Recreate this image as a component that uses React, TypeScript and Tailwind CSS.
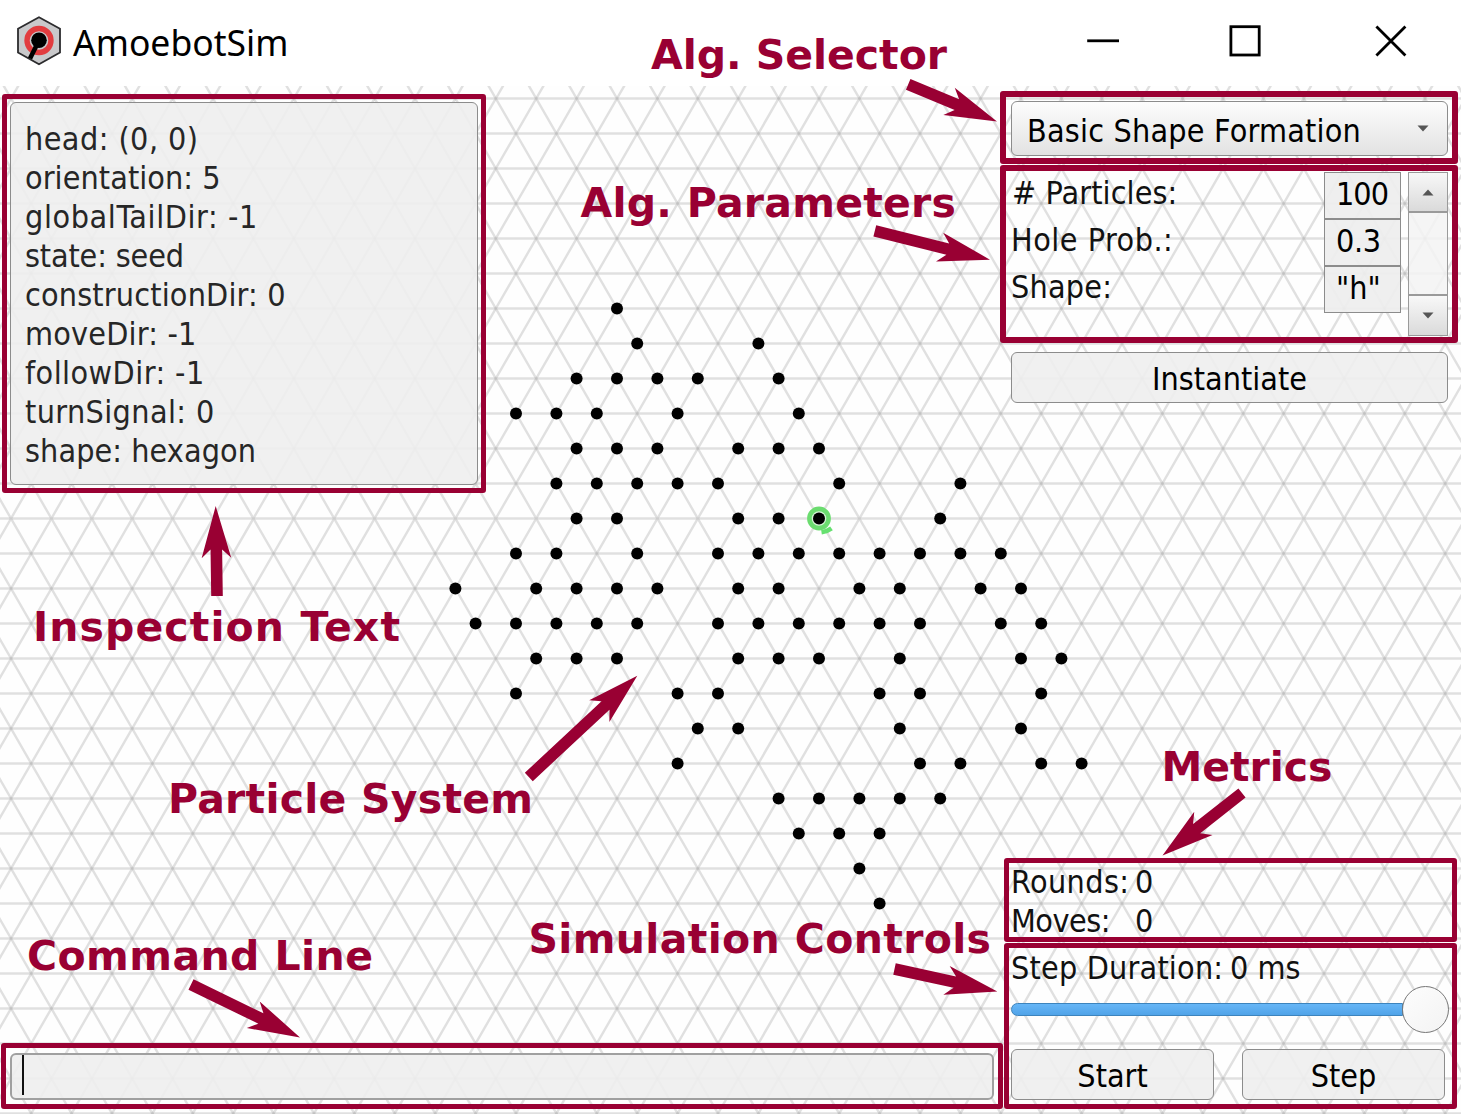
import React from "react";

const STEP_X = 20.2;
const STEP_Y = 35;
const ORIGIN_X = 819;
const ORIGIN_Y = 518.5;

// Each entry: lattice row, followed by the half-step columns that hold a particle.
const particles: [number, number[]][] = [
  [-6, [-10]],
  [-5, [-9, -3]],
  [-4, [-12, -10, -8, -6, -2]],
  [-3, [-15, -13, -11, -7, -1]],
  [-2, [-12, -10, -8, -4, -2, 0]],
  [-1, [-13, -11, -9, -7, -5, 1, 7]],
  [0, [-12, -10, -4, -2, 0, 6]],
  [1, [-15, -13, -9, -5, -3, -1, 1, 3, 5, 7, 9]],
  [2, [-18, -14, -12, -10, -8, -4, -2, 2, 4, 8, 10]],
  [3, [-17, -15, -13, -11, -9, -5, -3, -1, 1, 3, 5, 9, 11]],
  [4, [-14, -12, -10, -4, -2, 0, 4, 10, 12]],
  [5, [-15, -7, -5, 3, 5, 11]],
  [6, [-6, -4, 4, 10]],
  [7, [-7, 5, 7, 11, 13]],
  [8, [-2, 0, 2, 4, 6]],
  [9, [-1, 1, 3]],
  [10, [2]],
  [11, [3]],
];

function Lattice() {
  const rows = Array.from({ length: 30 }, (_, i) => ORIGIN_Y + (i - 12) * STEP_Y);
  const diagonals = Array.from({ length: 72 }, (_, i) => i - 46);
  const up = 14;
  const down = 18;
  return (
    <svg className="absolute inset-0" width="1461" height="1114" viewBox="0 0 1461 1114">
      <defs>
        <clipPath id="canvas">
          <rect x="0" y="86" width="1461" height="1028" />
        </clipPath>
      </defs>
      <g clipPath="url(#canvas)">
        <rect x="0" y="86" width="1461" height="1028" fill="#fefefe" />
        <g stroke="#b0b0b0" strokeOpacity="0.38" strokeWidth="2.5">
          {rows.map((y) => (
            <line key={y} x1="0" x2="1461" y1={y} y2={y} />
          ))}
          {diagonals.map((d) => {
            const x = ORIGIN_X + d * STEP_X * 2;
            return (
              <path
                key={d}
                fill="none"
                strokeWidth="2.4"
                d={`M${x - up * STEP_X} ${ORIGIN_Y - up * STEP_Y}L${x + down * STEP_X} ${ORIGIN_Y + down * STEP_Y}M${x + up * STEP_X} ${ORIGIN_Y - up * STEP_Y}L${x - down * STEP_X} ${ORIGIN_Y + down * STEP_Y}`}
              />
            );
          })}
        </g>
        <circle cx="819" cy="518.5" r="9.6" fill="#d5f3d6" stroke="#6bdc6f" strokeWidth="4.6" />
        <path d="M821.5 532.3Q827 531.5 831.5 528.3" fill="none" stroke="#66e070" strokeWidth="4.6" />
        {particles.map(([row, cols]) =>
          cols.map((c) => (
            <circle key={`${row}:${c}`} cx={ORIGIN_X + c * STEP_X} cy={ORIGIN_Y + row * STEP_Y} r="6" fill="#000" />
          )),
        )}
      </g>
    </svg>
  );
}

const labels = [
  { text: "Alg. Selector", x: 651, y: 69, w: 296 },
  { text: "Alg. Parameters", x: 580.5, y: 216.5, w: 375.5 },
  { text: "Inspection Text", x: 33, y: 641, w: 367 },
  { text: "Particle System", x: 168, y: 813, w: 365 },
  { text: "Command Line", x: 27, y: 969.5, w: 346 },
  { text: "Simulation Controls", x: 528.5, y: 953, w: 462.5 },
  { text: "Metrics", x: 1161.5, y: 781, w: 171 },
];

// Tail x, tail y, tip x, tip y.
const arrows = [
  [908.2, 84.3, 997, 121.5],
  [874.8, 230.8, 990, 259.7],
  [217, 596, 215.7, 506],
  [528.8, 777, 637.3, 675.7],
  [191, 984.5, 300, 1037.5],
  [894.5, 969, 997.3, 991.5],
  [1242, 793, 1162.5, 855.5],
];

function Annotations() {
  return (
    <svg className="pointer-events-none absolute inset-0" width="1461" height="1114" viewBox="0 0 1461 1114" fill="#990033">
      {labels.map((l) => (
        <text
          key={l.text}
          x={l.x}
          y={l.y}
          textLength={l.w}
          className="font-['DejaVu_Sans',sans-serif] text-[41px] font-bold [font-stretch:normal]"
        >
          {l.text}
        </text>
      ))}
      {arrows.map(([x1, y1, x2, y2]) => {
        const len = Math.hypot(x2 - x1, y2 - y1);
        const angle = (Math.atan2(y2 - y1, x2 - x1) * 180) / Math.PI;
        return (
          <path
            key={`${x1}`}
            transform={`translate(${x2} ${y2}) rotate(${angle})`}
            d={`M0 0L-52 -14.8L-43.5 -5.8H${-len}V5.8H-43.5L-52 14.8Z`}
          />
        );
      })}
    </svg>
  );
}

function TitleBar() {
  return (
    <header className="flex h-[86px] items-center">
      <svg className="ml-[16px] mb-[5px]" width="46" height="50" viewBox="0 0 46 50">
        <path d="M23 1.2L44 12.7V36.5L23 48.3L2 36.5V12.7Z" fill="#c9c9cb" stroke="#2c2c2e" strokeWidth="1.8" />
        <circle cx="23" cy="24.5" r="12" fill="none" stroke="#e23c3f" strokeWidth="5.4" />
        <path d="M23 24.5L14 42.5" stroke="#000" strokeWidth="4.6" />
        <circle cx="23" cy="24.3" r="7.8" fill="#000" />
      </svg>
      <h1 className="ml-[11px] mb-[3px] font-['Noto_Sans',sans-serif] text-[35.5px] leading-[48px] text-black">AmoebotSim</h1>
      <svg className="ml-auto mr-[50px] mb-[5px]" width="326" height="40" viewBox="0 0 326 40" fill="none" stroke="#000" strokeWidth="2.8">
        <path d="M2.2 19.8H34" />
        <rect x="145.9" y="5.7" width="28.3" height="28.3" />
        <path d="M291.4 5.6L320.4 34.6M320.4 5.6L291.4 34.6" />
      </svg>
    </header>
  );
}

const inspection = [
  { text: "head: (0, 0)", className: "tracking-[0.45px]" },
  { text: "orientation: 5", className: "tracking-[0.08px]" },
  { text: "globalTailDir: -1", className: "tracking-[0.6px]" },
  { text: "state: seed", className: "tracking-[-0.15px]" },
  { text: "constructionDir: 0", className: "tracking-[0.17px]" },
  { text: "moveDir: -1", className: "tracking-[0.2px]" },
  { text: "followDir: -1", className: "tracking-[0.45px]" },
  { text: "turnSignal: 0", className: "tracking-[0.38px]" },
  { text: "shape: hexagon", className: "tracking-[0.08px]" },
];

const params = [
  { name: "# Particles:", value: "100", nameClass: "pl-px tracking-[0.1px]", valueClass: "tracking-[-1px]" },
  { name: "Hole Prob.:", value: "0.3", nameClass: "tracking-[0.5px]", valueClass: "tracking-[-0.3px]" },
  { name: "Shape:", value: '"h"', nameClass: "tracking-[0.2px]", valueClass: "tracking-normal" },
];

function Triangle({ up = false }: { up?: boolean }) {
  return (
    <svg width="12" height="7" viewBox="0 0 12 7" fill="#555">
      <path d={up ? "M0.5 6.5L6 0.5L11.5 6.5Z" : "M0.5 0.5L6 6.5L11.5 0.5Z"} />
    </svg>
  );
}

function Button({ children, className }: { children: React.ReactNode; className: string }) {
  return (
    <button
      className={`flex items-center justify-center rounded-[6px] border border-[#8c8c8c] bg-[#eeeeee]/90 leading-[39px] text-black ${className}`}
    >
      {children}
    </button>
  );
}

export default function App() {
  return (
    <div className="relative h-[1114px] w-[1461px] overflow-hidden bg-white font-['DejaVu_Sans_Condensed','DejaVu_Sans',sans-serif] text-[32px] leading-[39px] text-[#111] [font-stretch:condensed]">
      <Lattice />
      <div className="relative flex h-full flex-col">
        <TitleBar />
        <main className="flex flex-1 justify-between pr-[3px] pb-[5px]">
          <section className="flex w-[1003px] flex-col justify-between pl-px">
            <div className="mt-[8px] ml-px h-[399px] w-[484px] rounded-[3px] border-[5px] border-[#990033] p-[3px]">
              <div className="h-full rounded-[6px] border border-[#8c8c8c] bg-[#eeeeee]/90 pt-[17px] pl-[14px] text-[#262626]">
                {inspection.map((line) => (
                  <p key={line.text} className={line.className}>{line.text}</p>
                ))}
              </div>
            </div>
            <div className="h-[66px] rounded-[3px] border-[5px] border-[#990033] p-[4px] pt-[5px]">
              <div className="h-[47px] rounded-[6px] border-2 border-[#a0a0a0] bg-[#eeeeee]/90 pl-[10px]">
                <div className="h-[40px] w-[2px] bg-[#111]" />
              </div>
            </div>
          </section>

          <aside className="-ml-[3px] flex w-[458px] flex-col pt-[5px]">
            <div className="h-[73px] rounded-[3px] border-[6px] border-[#990033] px-[4px] pt-[4px]">
              <div className="ml-px flex h-[55px] items-center justify-between rounded-[6px] border border-[#8c8c8c] bg-linear-to-b from-[#fdfdfd] to-[#e2e2e2] pr-[18px] pl-[15px] text-black">
                <span className="pt-[5px] tracking-[0.2px]">Basic Shape Formation</span>
                <Triangle />
              </div>
            </div>
            <div className="mt-px flex h-[178px] rounded-[3px] border-[6px] border-[#990033] pl-[4px]">
              <div className="w-[314px] pt-[3px] pl-px">
                {params.map((p) => (
                  <p key={p.name} className={`h-[47px] ${p.nameClass}`}>{p.name}</p>
                ))}
              </div>
              <div className="flex w-[77px] flex-col pt-px">
                {params.map((p) => (
                  <div key={p.name} className={`h-[47px] border border-[#8c8c8c] bg-[#eeeeee]/92 pt-[2px] pl-[11px] text-black ${p.valueClass}`}>
                    {p.value}
                  </div>
                ))}
              </div>
              <div className="mt-px ml-[7px] flex h-[164px] w-[40px] flex-col border border-[#9a9a9a] bg-[#f3f3f3]/85">
                <div className="flex h-[40px] items-center justify-center border-b-2 border-[#9a9a9a] bg-linear-to-b from-[#f8f8f8] to-[#dadada]">
                  <Triangle up />
                </div>
                <div className="flex-1" />
                <div className="flex h-[41px] items-center justify-center border-t-2 border-[#9a9a9a] bg-linear-to-b from-[#f8f8f8] to-[#dadada]">
                  <Triangle />
                </div>
              </div>
            </div>
            <Button className="mt-[9px] ml-[11px] h-[51px] w-[437px] pt-[3px]">Instantiate</Button>

            <div className="mt-auto ml-[4px] h-[84px] w-[453px] rounded-[3px] border-[5px] border-[#990033] pl-[2px]">
              <p className="flex">
                <span className="w-[124px] tracking-[0.4px]">Rounds:</span>0
              </p>
              <p className="flex">
                <span className="w-[124px] tracking-[-0.5px]">Moves:</span>0
              </p>
            </div>
            <div className="mt-px ml-[4px] flex h-[166px] w-[453px] flex-col rounded-[3px] border-[5px] border-[#990033] pt-px pl-[2px]">
              <p className="flex">
                <span className="w-[219px] tracking-[0.2px]">Step Duration:</span>0 ms
              </p>
              <div className="-mt-[2px] flex h-[47px] items-center">
                <div className="h-[13px] w-[392px] rounded-l-full border border-[#3d84bd] bg-linear-to-b from-[#66b6f7] to-[#50a3e8]" />
                <div className="-ml-px size-[47px] rounded-full border-[1.5px] border-[#777] bg-linear-to-br from-[#fdfdfd] to-[#f3f3f3]" />
              </div>
              <div className="mt-[16px] flex gap-[28px]">
                <Button className="h-[51px] w-[203px] pt-[3px]">Start</Button>
                <Button className="h-[51px] w-[203px] pt-[3px]">Step</Button>
              </div>
            </div>
          </aside>
        </main>
      </div>
      <Annotations />
    </div>
  );
}
